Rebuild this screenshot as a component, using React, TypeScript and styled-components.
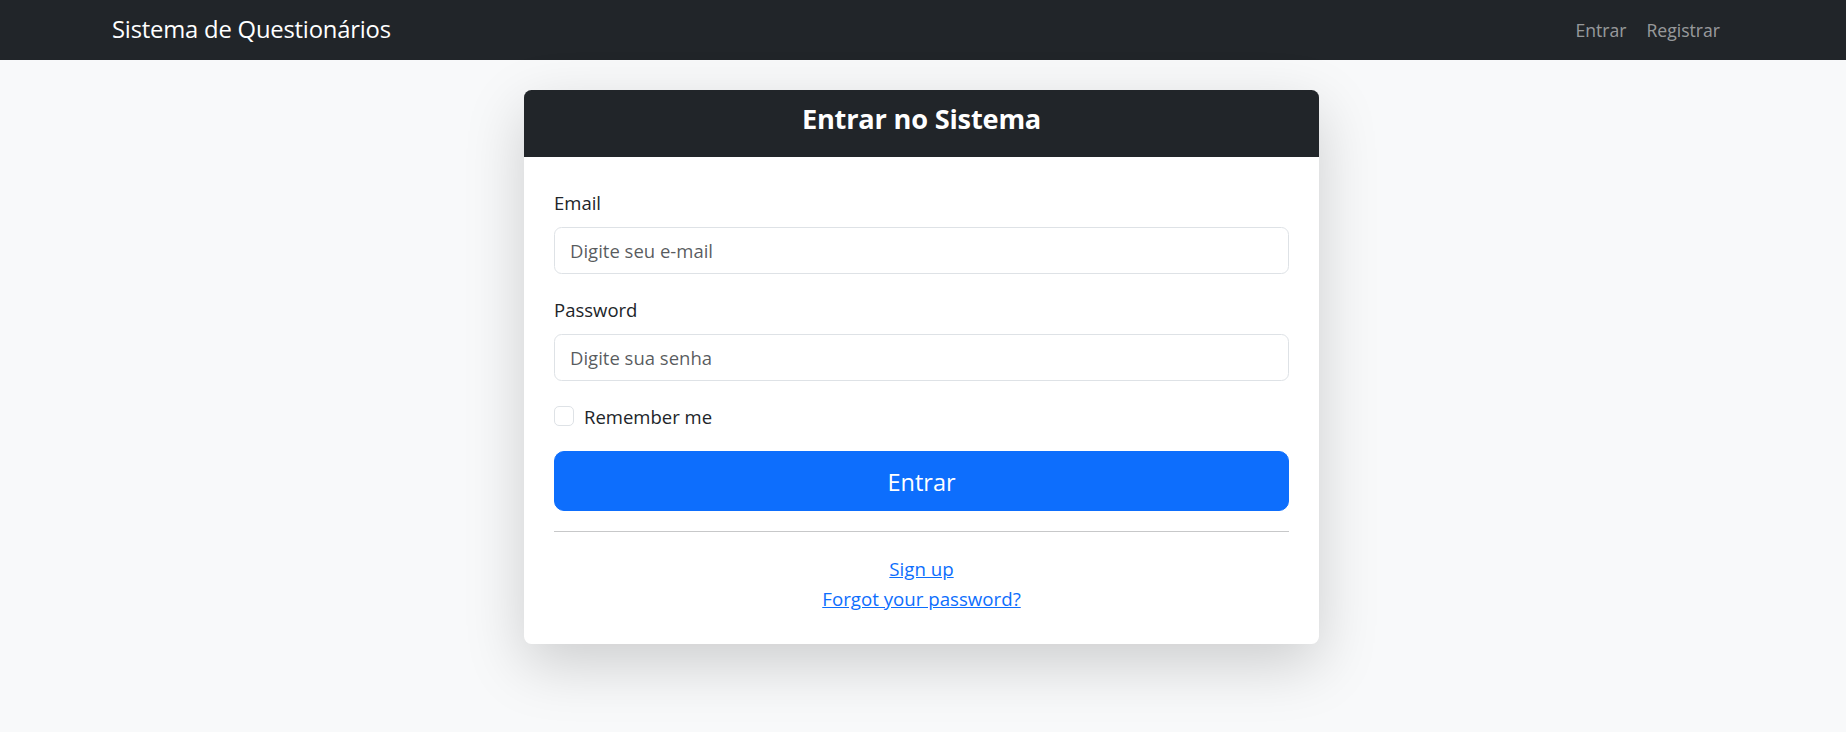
import React from "react";
import styled, { createGlobalStyle } from "styled-components";

const GlobalStyle = createGlobalStyle`
  * { box-sizing: border-box; }
  html, body { margin: 0; padding: 0; }
  body {
    background: #f8f9fa;
    color: #212529;
    font-family: "Open Sans", "Noto Sans", Arial, sans-serif;
    font-size: 19px;
    line-height: 1.5;
  }
`;

const Page = styled.div`
  min-height: 100vh;
  background: #f8f9fa;
`;

const Navbar = styled.nav`
  height: 60px;
  background: #212529;
  display: flex;
  align-items: center;
  justify-content: space-between;
  padding: 0 116px 1px 112px;
`;

const Brand = styled.a`
  color: #fff;
  font-size: 23.8px;
  line-height: 1.5;
  text-decoration: none;
  letter-spacing: -0.2px;
`;

const NavList = styled.ul`
  display: flex;
  list-style: none;
  margin: 0;
  padding: 0;
`;

const NavLink = styled.a`
  display: block;
  padding: 0 10px;
  color: rgba(255, 255, 255, 0.55);
  font-size: 17.6px;
  line-height: 30px;
  text-decoration: none;
`;

const Main = styled.main`
  display: flex;
  justify-content: center;
  padding: 30px 0 80px;
`;

const Card = styled.section`
  width: 795px;
  margin-right: 3px;
  background: #fff;
  border-radius: 7.5px;
  box-shadow: 0 20px 60px rgba(0, 0, 0, 0.175);
  overflow: hidden;
`;

const CardHeader = styled.header`
  background: #212529;
  padding: 11px 20px 10px;
  height: 67px;
  text-align: center;
`;

const Title = styled.h4`
  margin: 0;
  color: #fff;
  font-size: 27.2px;
  font-weight: 700;
  line-height: 36px;
  letter-spacing: -0.2px;
`;

const CardBody = styled.div`
  padding: 30px;
`;

const Field = styled.div`
  margin-bottom: 20px;
`;

const Label = styled.label`
  display: block;
  margin-bottom: 10px;
  padding-top: 1px;
  height: 30px;
  font-size: 18.5px;
  line-height: 30px;
  color: #212529;
`;

const Input = styled.input`
  display: block;
  width: 100%;
  height: 47px;
  padding: 7.5px 15px;
  font-family: inherit;
  font-size: 18.5px;
  line-height: 30px;
  color: #212529;
  background: #fff;
  border: 1px solid #dee2e6;
  border-radius: 7.5px;
  outline: none;
  &::placeholder {
    color: rgba(33, 37, 41, 0.75);
  }
`;

const CheckRow = styled.label`
  display: flex;
  align-items: center;
  gap: 10px;
  height: 30px;
  margin-bottom: 20px;
  font-size: 18.5px;
`;

const CheckText = styled.span`
  padding-top: 2px;
  line-height: 28px;
`;

const CheckBox = styled.input`
  appearance: none;
  margin: 0;
  width: 20px;
  height: 20px;
  border: 1px solid #dee2e6;
  border-radius: 5px;
  background: #fff;
`;

const Button = styled.button`
  display: block;
  width: 100%;
  height: 59.5px;
  padding: 12px 20px 8px;
  font-family: inherit;
  font-size: 23.5px;
  line-height: 37.5px;
  color: #fff;
  background: #0d6efd;
  border: 1px solid #0d6efd;
  border-radius: 10px;
`;

const Divider = styled.hr`
  margin: 20px 0;
  border: 0;
  border-top: 1px solid #212529;
  opacity: 0.25;
`;

const LinkBlock = styled.div`
  padding-top: 2px;
  text-align: center;
  font-size: 18.7px;
  line-height: 30px;
`;

const TextLink = styled.a`
  color: #0d6efd;
  text-decoration: underline;
`;

export default function App() {
  return (
    <Page>
      <GlobalStyle />
      <Navbar>
        <Brand href="#">Sistema de Questionários</Brand>
        <NavList>
          <li>
            <NavLink href="#">Entrar</NavLink>
          </li>
          <li>
            <NavLink href="#">Registrar</NavLink>
          </li>
        </NavList>
      </Navbar>
      <Main>
        <Card>
          <CardHeader>
            <Title>Entrar no Sistema</Title>
          </CardHeader>
          <CardBody>
            <Field>
              <Label htmlFor="email">Email</Label>
              <Input id="email" type="email" placeholder="Digite seu e-mail" />
            </Field>
            <Field>
              <Label htmlFor="password">Password</Label>
              <Input id="password" type="password" placeholder="Digite sua senha" />
            </Field>
            <CheckRow>
              <CheckBox type="checkbox" />
              <CheckText>Remember me</CheckText>
            </CheckRow>
            <Button type="submit">Entrar</Button>
            <Divider />
            <LinkBlock>
              <div>
                <TextLink href="#">Sign up</TextLink>
              </div>
              <div>
                <TextLink href="#">Forgot your password?</TextLink>
              </div>
            </LinkBlock>
          </CardBody>
        </Card>
      </Main>
    </Page>
  );
}
